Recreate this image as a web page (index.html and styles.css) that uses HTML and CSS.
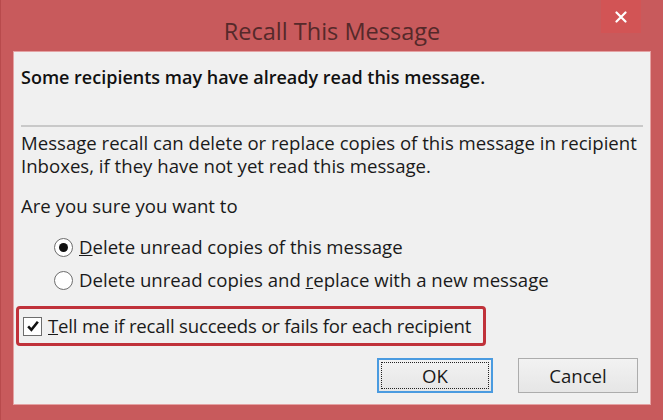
FILE: index.html
```html
<!DOCTYPE html>
<html lang="en">
<head>
    <meta charset="UTF-8">
    <title>Recall This Message</title>
    <link rel="stylesheet" href="styles.css">
</head>
<body>
    <div class="window">
        <div class="titlebar">
            <span></span>
            <h1 class="title">Recall This Message</h1>
            <button class="close-btn">
                <svg width="12" height="12" viewBox="0 0 12 12"><path d="M1.5 1.5 L10.5 10.5 M10.5 1.5 L1.5 10.5" stroke="#fff" stroke-width="2.2" stroke-linecap="round"/></svg>
            </button>
        </div>

        <div class="panel">
            <p class="warning">Some recipients may have already read this message.</p>
            <hr class="divider">
            <p class="info">Message recall can delete or replace copies of this message in recipient<br>Inboxes, if they have not yet read this message.</p>
            <p class="question">Are you sure you want to</p>

            <div class="options">
                <label class="option">
                    <span class="radio checked"></span>
                    <span><u>D</u>elete unread copies of this message</span>
                </label>
                <label class="option">
                    <span class="radio"></span>
                    <span>Delete unread copies and <u>r</u>eplace with a new message</span>
                </label>
            </div>

            <div class="highlight">
                <label class="check-row">
                    <span class="checkbox">
                        <svg width="14" height="14" viewBox="0 0 13 13"><path d="M2 6.8 L5 10 L11 2.5" fill="none" stroke="#111" stroke-width="2.4"/></svg>
                    </span>
                    <span class="check-label"><u>T</u>ell me if recall succeeds or fails for each recipient</span>
                </label>
            </div>

            <div class="buttons">
                <button class="btn btn-default"><span class="focus">OK</span></button>
                <button class="btn">Cancel</button>
            </div>
        </div>
    </div>
</body>
</html>
```

FILE: styles.css
```css
body {
    margin: 0;
    background: #c85a5c;
    font-family: "Open Sans", "Noto Sans", sans-serif;
}
.window {
    width: 663px;
    height: 420px;
    box-sizing: border-box;
    background: #c85a5c;
    border-left: 1px solid #b84a4c;
    display: flex;
    flex-direction: column;
}
.titlebar {
    height: 51px;
    flex-shrink: 0;
    display: grid;
    grid-template-columns: 1fr auto 1fr;
    align-items: start;
}
.title {
    margin: 0;
    padding-top: 17px;
    font-size: 23.5px;
    font-weight: normal;
    color: #55292a;
    line-height: 28px;
}
.close-btn {
    justify-self: end;
    margin-right: 22px;
    width: 40px;
    height: 33px;
    border: none;
    background: #d25455;
    display: flex;
    align-items: center;
    justify-content: center;
    padding: 0;
}
.panel {
    margin: 0 12px 15px 12px;
    flex: 1;
    min-height: 0;
    background: #f0f0f0;
    padding: 0 7px;
    border: 1px solid #e4a2a3;
    color: #1a1a1a;
    font-size: 18.6px;
}
.warning {
    margin: 13px 0 0 0;
    font-size: 18px;
    font-weight: 600;
    line-height: 24px;
    color: #111;
}
.divider {
    border: none;
    border-top: 2px solid #c9c9c9;
    margin: 36px 0 4px 0;
}
.info {
    margin: 0;
    line-height: 23px;
}
.question {
    margin: 17px 0 0 0;
    line-height: 23px;
}
.options {
    margin: 18px 0 0 33px;
    display: flex;
    flex-direction: column;
    gap: 9px;
}
.option, .check-row {
    display: flex;
    align-items: center;
    gap: 6px;
    line-height: 24px;
    white-space: nowrap;
}
.check-label {
    letter-spacing: -0.2px;
}
.radio {
    width: 17px;
    height: 17px;
    border: 1px solid #6d6d6d;
    border-radius: 50%;
    background: #fff;
    display: flex;
    align-items: center;
    justify-content: center;
}
.radio.checked::after {
    content: "";
    width: 9px;
    height: 9px;
    border-radius: 50%;
    background: #111;
}
.highlight {
    margin: 14px 0 0 -5px;
    width: 455px;
    border: 3px solid #c0323a;
    border-radius: 4px;
    padding: 5px 5px 5px 4px;
}
.checkbox {
    width: 17px;
    height: 17px;
    border: 1px solid #6d6d6d;
    background: #fff;
    display: flex;
    align-items: center;
    justify-content: center;
}
.buttons {
    margin-top: 12px;
    display: flex;
    justify-content: flex-end;
    gap: 25px;
    padding-right: 5px;
}
.btn {
    width: 120px;
    height: 35px;
    font-family: inherit;
    font-size: 18.6px;
    color: #1a1a1a;
    background: linear-gradient(#f2f2f2, #e6e6e6);
    border: 1px solid #acacac;
    padding: 2px;
}
.btn-default {
    width: 116px;
    border: 2px solid #4a9be0;
}
.focus {
    display: flex;
    align-items: center;
    justify-content: center;
    height: 100%;
    border: 1px dotted #222;
    box-sizing: border-box;
}
```
